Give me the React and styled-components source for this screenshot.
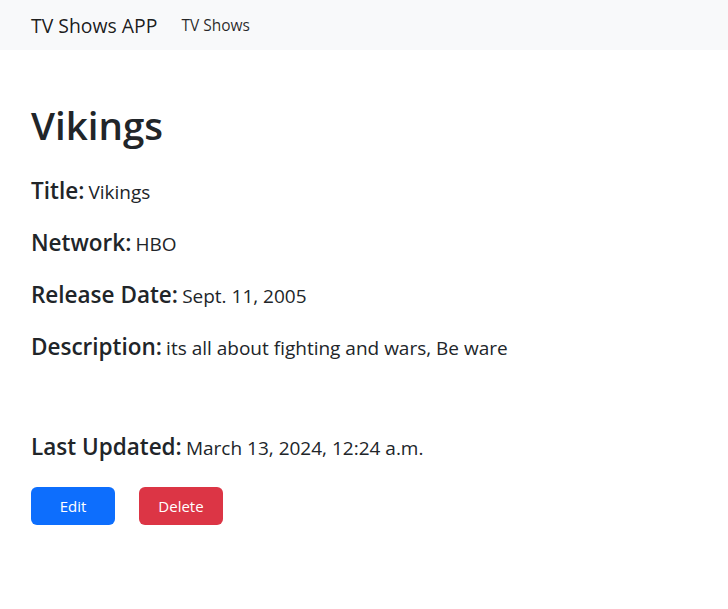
import React from "react";
import styled, { createGlobalStyle } from "styled-components";

const GlobalStyle = createGlobalStyle`
  body {
    margin: 0;
    background: #fff;
    color: #212529;
    font-family: "Open Sans", "Noto Sans", sans-serif;
  }
`;

const show = {
  name: "Vikings",
  network: "HBO",
  releaseDate: "Sept. 11, 2005",
  description: "its all about fighting and wars, Be ware",
  updatedAt: "March 13, 2024, 12:24 a.m.",
};

const App = () => {
  const fields = [
    ["Title", show.name],
    ["Network", show.network],
    ["Release Date", show.releaseDate],
    ["Description", show.description],
  ];
  return (
    <>
      <GlobalStyle />
      <Navbar>
        <Brand>TV Shows APP</Brand>
        <NavLink>TV Shows</NavLink>
      </Navbar>
      <Container>
        <Heading>{show.name}</Heading>
        <Fields>
          {fields.map(([label, value]) => (
            <Row key={label}>
              <Label>{label}:</Label> <Value>{value}</Value>
            </Row>
          ))}
        </Fields>
        <Row $spaced>
          <Label>Last Updated:</Label> <Value>{show.updatedAt}</Value>
        </Row>
        <Actions>
          <Btn $variant="primary">Edit</Btn>
          <Btn $variant="danger">Delete</Btn>
        </Actions>
      </Container>
    </>
  );
};

const Navbar = styled.nav`
  height: 50px;
  background-color: #f8f9fa;
  display: flex;
  align-items: center;
  padding: 0 31px;
  gap: 24px;
`;

const Brand = styled.span`
  font-size: 19.4px;
  color: rgba(0, 0, 0, 0.9);
`;

const NavLink = styled.span`
  font-size: 15.5px;
  color: rgba(0, 0, 0, 0.85);
`;

const Container = styled.main`
  padding: 51px 31px 0;
`;

const Heading = styled.h1`
  margin: 0 0 27px;
  font-size: 38.5px;
  font-weight: 600;
  line-height: 48px;
`;

const Fields = styled.div`
  display: flex;
  flex-direction: column;
  gap: 22px;
`;

const Row = styled.p`
  margin: ${(p) => (p.$spaced ? "70px 0 0" : "0")};
  height: 30px;
  line-height: 30px;
`;

const Label = styled.strong`
  font-size: 22.5px;
  font-weight: 600;
`;

const Value = styled.span`
  font-size: 19px;
`;

const Actions = styled.div`
  display: flex;
  gap: 24px;
  margin-top: 25px;
`;

const Btn = styled.button`
  width: 84px;
  height: 38px;
  border: none;
  border-radius: 6px;
  font-family: inherit;
  font-size: 15px;
  color: #fff;
  cursor: pointer;
  background-color: ${(p) => (p.$variant === "danger" ? "#dc3545" : "#0d6efd")};
`;

export default App;
